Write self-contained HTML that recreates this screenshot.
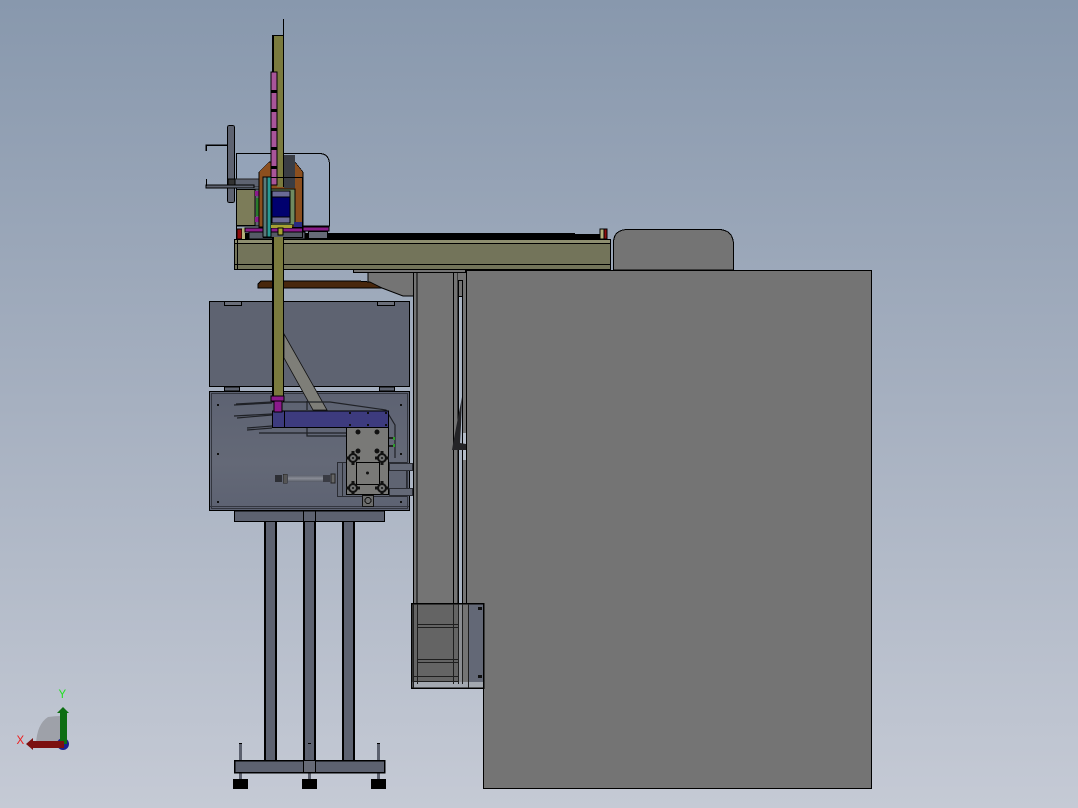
<!DOCTYPE html>
<html><head><meta charset="utf-8"><style>
html,body{margin:0;padding:0;width:1078px;height:808px;overflow:hidden}
body{background:linear-gradient(180deg,#8898ad 0%,#a6b0c0 50%,#c5cad5 100%)}
svg{display:block;position:absolute;left:0;top:0}
text{font-family:"Liberation Sans",sans-serif}
</style></head><body>
<svg width="1078" height="808" viewBox="0 0 1078 808" xmlns="http://www.w3.org/2000/svg" shape-rendering="crispEdges">
<defs>
<linearGradient id="g" x1="0" x2="0" y1="0" y2="1"><stop offset="0" stop-color="#5d6272"/><stop offset=".6" stop-color="#646977"/><stop offset="1" stop-color="#5d6272"/></linearGradient>
<linearGradient id="rod" x1="0" x2="0" y1="0" y2="1"><stop offset="0" stop-color="#5b606c"/><stop offset=".5" stop-color="#8a8d96"/><stop offset="1" stop-color="#555a66"/></linearGradient>
<g id="fl">
<circle r="4" fill="#6f7070" stroke="#111" stroke-width="2" shape-rendering="auto"/>
<circle r="1" fill="#111" shape-rendering="auto"/>
<rect x="-7" y="-1.500" width="3" height="3" fill="#111"/><rect x="4" y="-1.500" width="3" height="3" fill="#111"/>
<rect x="-1.500" y="-7" width="3" height="3" fill="#111"/><rect x="-1.500" y="4" width="3" height="3" fill="#111"/>
</g>
</defs>
<!-- cap behind big block -->
<path d="M613.500 270V243Q613.500 229.500 628 229.500H718Q733.500 229.500 733.500 245V270Z" fill="#747474" stroke="#000"/>
<!-- column -->
<rect x="413.500" y="270" width="44.500" height="335" fill="#747474" stroke="#000"/>
<line x1="417" y1="270" x2="417" y2="605" stroke="#000"/>
<line x1="453.500" y1="270" x2="453.500" y2="605" stroke="#000"/>
<rect x="459" y="297" width="4" height="308" fill="#a9b3c2"/>
<rect x="458" y="270" width="8" height="27" fill="#747474"/>
<rect x="463" y="297" width="3" height="308" fill="#747474"/>
<rect x="463" y="433" width="3" height="27" fill="#b4bcc8"/>
<line x1="458.500" y1="296.500" x2="463" y2="296.500" stroke="#000"/>
<path d="M462.500 280.500H458.500V605" fill="none" stroke="#000"/>
<line x1="462.500" y1="280" x2="462.500" y2="605" stroke="#000"/>
<path d="M462 397L456 428L453 444L452 450H466V444L460 443L461 425Z" fill="#242427" shape-rendering="auto"/>
<!-- big gray -->
<path d="M466.500 270.500H871.500V788.500H483.500V688H466.500Z" fill="#747474" stroke="#000"/>
<!-- under-beam -->
<rect x="353.500" y="269.500" width="112" height="3" fill="#747474" stroke="#000"/>
<path d="M368 273H413V296H403L390 291L380 288L368 282Z" fill="#747474"/>
<path d="M368 273V282L382 288L403 296H413" fill="none" stroke="#000" shape-rendering="auto"/>
<path d="M258 284L261 281H358L370 282L382 288H258Z" fill="#48270d" stroke="#000"/>
<!-- legs -->
<g fill="#5d6270" stroke="#000" stroke-width="2">
<rect x="265" y="518" width="11" height="243"/>
<rect x="304" y="518" width="11" height="243"/>
<rect x="343" y="518" width="11" height="243"/>
</g>
<!-- feet rods -->
<g fill="#5b606e">
<rect x="239" y="743" width="3" height="18"/><rect x="377" y="743" width="3" height="18"/><rect x="308" y="743" width="3" height="18"/>
<rect x="239" y="772" width="3" height="8"/><rect x="308" y="772" width="3" height="8"/><rect x="377" y="772" width="3" height="8"/>
</g>
<g fill="#000"><rect x="239" y="743" width="3" height="1"/><rect x="308" y="743" width="3" height="1"/><rect x="377" y="743" width="3" height="1"/>
<rect x="233" y="779" width="15" height="10"/><rect x="302" y="779" width="15" height="10"/><rect x="371" y="779" width="15" height="10"/></g>
<rect x="234.500" y="760.500" width="150" height="12" fill="#5d6270" stroke="#000" stroke-width="1.500"/>
<rect x="303.500" y="760.500" width="12" height="12" fill="#666a76" stroke="#000"/>
<!-- upper panel -->
<rect x="209.500" y="301.500" width="200" height="85" fill="#5e6371" stroke="#000"/>
<rect x="224.500" y="301.500" width="17" height="4" fill="#6a6e79" stroke="#000"/>
<rect x="377.500" y="301.500" width="17" height="4" fill="#6a6e79" stroke="#000"/>
<rect x="224.500" y="387" width="15" height="4" fill="#5e6371" stroke="#000"/>
<rect x="379.500" y="387" width="15" height="4" fill="#5e6371" stroke="#000"/>
<!-- lower panel -->
<rect x="209.500" y="391.500" width="200" height="119" fill="url(#g)" stroke="#000"/>
<rect x="211.500" y="393.500" width="196" height="115" fill="none" stroke="#33363f"/>
<line x1="210" y1="506.500" x2="409" y2="506.500" stroke="#33363f"/>
<rect x="234.500" y="511" width="150" height="10.500" fill="#5d6270" stroke="#000"/>
<rect x="303.500" y="511" width="12" height="10.500" fill="#5d6270" stroke="#000"/>
<!-- diagonal -->
<path d="M284 334L327 410H313L284 358Z" fill="#7e7e78" stroke="#111" stroke-width=".8" shape-rendering="auto"/>
<!-- wires -->
<g fill="none" stroke="#1f2126" stroke-width="1.200" shape-rendering="auto">
<path d="M234 405L272 403"/><path d="M236 404L272 402L330 402L386 410L395 425V458"/>
<path d="M234 416L272 414"/><path d="M237 418L272 415"/>
<path d="M247 428L272 426"/><path d="M247 430L272 428"/><path d="M259 433H347"/><path d="M307 428V436H347"/>
<path d="M307 401V410"/>
</g>
<!-- blue bar -->
<rect x="272.500" y="411" width="116" height="16.500" fill="#3d3b7e" stroke="#000"/>
<line x1="284.500" y1="411" x2="284.500" y2="427" stroke="#000"/>
<g fill="#111"><rect x="349" y="412" width="2" height="2"/><rect x="367" y="412" width="2" height="2"/><rect x="385" y="412" width="2" height="2"/><rect x="349" y="424" width="2" height="2"/><rect x="367" y="424" width="2" height="2"/><rect x="385" y="424" width="2" height="2"/></g>
<!-- slide plate -->
<rect x="337.500" y="462.500" width="69" height="34" fill="#5f6472" stroke="#2a2c33"/>
<line x1="342.500" y1="463" x2="342.500" y2="496" stroke="#2a2c33"/>
<rect x="389.500" y="463.500" width="23" height="7" fill="#646977" stroke="#2a2c33"/><rect x="389.500" y="488.500" width="23" height="7" fill="#646977" stroke="#2a2c33"/>
<rect x="362.500" y="495.500" width="11" height="11" fill="#6b6c6c" stroke="#111"/>
<circle cx="368" cy="500.500" r="3" fill="none" stroke="#111"/>
<rect x="346.500" y="427.500" width="42" height="67" fill="#797977" stroke="#000"/>
<rect x="356.500" y="462.500" width="23" height="22" fill="none" stroke="#000"/>
<g fill="#111" shape-rendering="auto"><circle cx="358" cy="432" r="2.500"/><circle cx="377" cy="432" r="2.500"/><circle cx="358" cy="451" r="2.500"/><circle cx="377" cy="451" r="2.500"/><circle cx="367.500" cy="473" r="1.500"/></g>
<use href="#fl" x="353" y="458"/><use href="#fl" x="382" y="458"/><use href="#fl" x="353" y="488"/><use href="#fl" x="382" y="488"/>
<rect x="389" y="437" width="5" height="2" fill="#222"/><rect x="389" y="445" width="5" height="2" fill="#222"/>
<rect x="393" y="437" width="2" height="3" fill="#2c9a2c"/><rect x="393" y="444" width="2" height="3" fill="#2c9a2c"/>
<!-- cylinder -->
<rect x="275" y="475" width="7" height="7" fill="#2d2f35"/>
<rect x="283" y="474" width="4" height="9" fill="#555" stroke="#222" stroke-width=".5"/>
<rect x="288" y="475" width="35" height="7" fill="url(#rod)"/>
<rect x="323" y="475" width="7" height="7" fill="#3a3c44"/><rect x="331" y="474" width="4" height="9" fill="#666" stroke="#222" stroke-width=".6"/>
<!-- panel dots -->
<g fill="#111"><rect x="217" y="404" width="2" height="2"/><rect x="400" y="404" width="2" height="2"/><rect x="217" y="453" width="2" height="2"/><rect x="217" y="501" width="2" height="2"/><rect x="400" y="501" width="2" height="2"/><rect x="400" y="453" width="2" height="2"/></g>
<!-- transparent box -->
<rect x="412" y="604" width="46" height="80" fill="#646464"/>
<rect x="458" y="604" width="4" height="80" fill="#8a8c90"/>
<rect x="462" y="604" width="6" height="80" fill="#747474"/>
<rect x="468" y="604" width="15" height="80" fill="#636876"/>
<rect x="411" y="682" width="72" height="6" fill="#a3a8b0"/>
<rect x="411.500" y="603.500" width="72" height="84.500" fill="none" stroke="#000" stroke-width="1.500"/>
<g stroke="#1e1e1e" fill="none"><line x1="413.500" y1="604" x2="413.500" y2="688"/><line x1="417.500" y1="604" x2="417.500" y2="684"/><line x1="453.500" y1="604" x2="453.500" y2="684"/><line x1="458.500" y1="604" x2="458.500" y2="684"/><line x1="462.500" y1="604" x2="462.500" y2="684"/><line x1="468.500" y1="604" x2="468.500" y2="688"/>
<rect x="417.500" y="624.500" width="41" height="3"/><rect x="417.500" y="659.500" width="41" height="3"/><line x1="414" y1="676.500" x2="458" y2="676.500"/><line x1="459" y1="681.500" x2="414" y2="681.500"/></g>
<rect x="478" y="607" width="4" height="3" fill="#111"/><rect x="478" y="675" width="4" height="3" fill="#111"/>
<!-- glass box -->
<path d="M236.500 239V153.500H319Q329.500 153.500 329.500 165V226H236.500" fill="#94a3b8" stroke="#000"/>
<!-- black strip -->
<rect x="245" y="233" width="330" height="6" fill="#000"/><rect x="575" y="234" width="26" height="5" fill="#000"/>
<!-- beam -->
<rect x="234.500" y="239.500" width="376" height="30" fill="#73745a" stroke="#000"/>
<rect x="235" y="240" width="375" height="3" fill="#8e8e70"/>
<line x1="235" y1="243.500" x2="610" y2="243.500" stroke="#000"/><line x1="235" y1="264.500" x2="610" y2="264.500" stroke="#000"/>
<line x1="237.500" y1="240" x2="237.500" y2="269" stroke="#000"/>
<!-- small red/yellow end pieces -->
<rect x="237" y="229" width="5" height="10" fill="#8f0d0d" stroke="#000" stroke-width=".8"/><rect x="242" y="228" width="3" height="11" fill="#b3b07a"/>
<rect x="600" y="229" width="4" height="10" fill="#b3b07a" stroke="#000" stroke-width=".6"/><rect x="604" y="229" width="3" height="10" fill="#8f0d0d" stroke="#000" stroke-width=".6"/>
<!-- left assembly -->
<rect x="227.500" y="125.500" width="7" height="77" rx="2" fill="#5e6371" stroke="#000"/>
<path d="M206 151V145H227" fill="none" stroke="#000" stroke-width="1.500"/>
<rect x="228" y="179" width="33" height="8" fill="#5e6371" stroke="#222"/>
<rect x="228" y="179" width="7" height="6" fill="#333" stroke="#000"/>
<rect x="206" y="185" width="48" height="3" fill="#5e6371" stroke="#000"/>
<line x1="206.500" y1="179" x2="206.500" y2="186" stroke="#000"/>
<rect x="236.500" y="189.500" width="19" height="36" fill="#7c7c59" stroke="#000"/>
<rect x="255" y="189" width="8" height="37" fill="#5e6371" stroke="#000" stroke-width=".7"/>
<rect x="256" y="198" width="4" height="18" fill="#2a7a2a"/>
<rect x="255" y="191" width="5" height="5" fill="#8b1a8b"/><rect x="255" y="217" width="5" height="5" fill="#8b1a8b"/>
<!-- carriage -->
<path d="M259 227V172L269 162H295L303 172V227Z" fill="#8c4f1e" stroke="#000" stroke-width=".6"/>
<rect x="284" y="155" width="11" height="33" fill="#3a3d44"/>
<rect x="245" y="228" width="58" height="4" fill="#8a1c8a" stroke="#000" stroke-width=".6"/>
<rect x="303" y="227" width="26" height="4" fill="#8a1c8a" stroke="#000" stroke-width=".6"/>
<rect x="308.500" y="231.500" width="19" height="7" fill="#666a76" stroke="#000"/>
<rect x="249" y="232" width="56" height="7" fill="#555a66" stroke="#000" stroke-width=".6"/>
<!-- mast top -->
<line x1="283.500" y1="19" x2="283.500" y2="36" stroke="#000"/>
<rect x="277" y="35" width="7" height="152" fill="#7a7a3e"/>
<rect x="272" y="35" width="6" height="37" fill="#7a7a3e"/>
<rect x="272" y="35" width="2" height="37" fill="#000"/><rect x="272" y="35" width="12" height="1" fill="#000"/><rect x="283" y="35" width="1" height="152" fill="#000"/>
<rect x="271" y="72" width="6" height="113" fill="#a9559a" stroke="#000" stroke-width="1"/>
<g fill="#000"><rect x="271" y="90" width="6" height="3"/><rect x="271" y="109" width="6" height="3"/><rect x="271" y="128" width="6" height="3"/><rect x="271" y="147" width="6" height="3"/><rect x="271" y="166" width="6" height="3"/></g>
<!-- carriage front -->
<rect x="263.500" y="177.500" width="39" height="60" fill="none" stroke="#000"/>
<rect x="263" y="177" width="4" height="60" fill="#5a7a7a" stroke="#000" stroke-width=".6"/>
<rect x="267" y="177" width="4" height="60" fill="#2a9a94" stroke="#000" stroke-width=".6"/>
<rect x="271" y="189" width="24" height="36" fill="#708a60" stroke="#000" stroke-width=".6"/>
<rect x="272" y="191" width="18" height="6" fill="#6a6a96" stroke="#000" stroke-width=".6"/>
<rect x="272" y="217" width="18" height="6" fill="#6a6a96" stroke="#000" stroke-width=".6"/>
<rect x="272" y="197" width="18" height="20" fill="#00006e" stroke="#000" stroke-width=".6"/>
<rect x="271" y="225" width="21" height="3" fill="#a8a232"/>
<rect x="278" y="228" width="5" height="7" fill="#a8a232" stroke="#000" stroke-width=".6"/>
<rect x="294" y="222" width="8" height="5" fill="#2a2a80"/>
<!-- lower mast -->
<rect x="272" y="237" width="12" height="165" fill="#7a7a3e"/>
<rect x="272" y="237" width="2" height="165" fill="#000"/><rect x="283" y="237" width="1" height="165" fill="#000"/>
<rect x="271" y="396" width="13" height="5" fill="#8b1a8b" stroke="#000" stroke-width=".8"/>
<rect x="274" y="401" width="8" height="11" fill="#8b1a8b" stroke="#000" stroke-width=".8"/>
<!-- triad -->
<g shape-rendering="auto">
<path d="M36 744Q37 724 48 717Q55 716 61 716V744Z" fill="#9ea1a9"/>
<circle cx="63" cy="744" r="6" fill="#1a1f8f"/>
<rect x="60" y="711" width="7" height="33" fill="#0d6e12"/>
<path d="M57 713L63 707L69 713Z" fill="#0d6e12"/>
<rect x="33" y="741" width="31" height="7" fill="#7c1010"/>
<path d="M33 738V750L26 744Z" fill="#7c1010"/>
<text x="16.500" y="744" font-size="11.500" fill="#ee1c1c">X</text>
<text x="58.500" y="698" font-size="11.500" fill="#22e022">Y</text>
</g>
</svg>
</body></html>
